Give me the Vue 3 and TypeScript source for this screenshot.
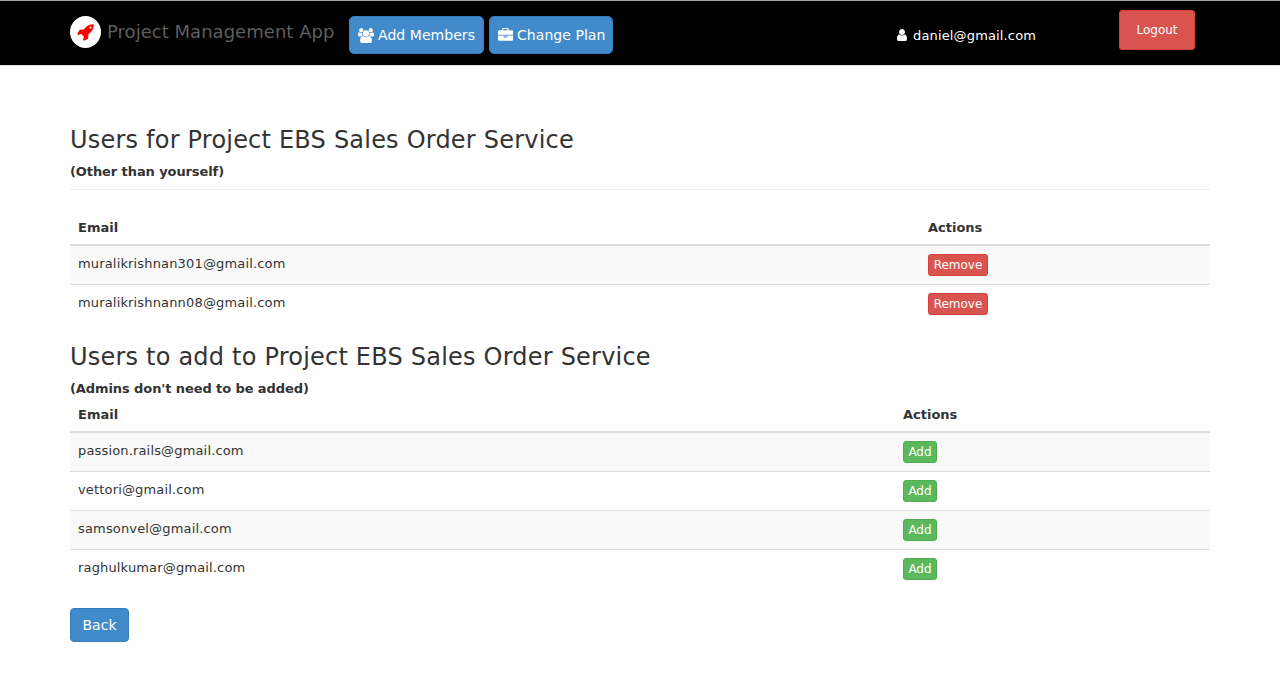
<script setup lang="ts">
interface Section {
  kind: string
  title: string
  note: string
  action: string
  emails: string[]
}

const sections: Section[] = [
  {
    kind: 'members',
    title: 'Users for Project EBS Sales Order Service',
    note: '(Other than yourself)',
    action: 'Remove',
    emails: ['muralikrishnan301@gmail.com', 'muralikrishnann08@gmail.com'],
  },
  {
    kind: 'candidates',
    title: 'Users to add to Project EBS Sales Order Service',
    note: "(Admins don't need to be added)",
    action: 'Add',
    emails: ['passion.rails@gmail.com', 'vettori@gmail.com', 'samsonvel@gmail.com', 'raghulkumar@gmail.com'],
  },
]
</script>

<template>
  <div class="page">
    <header class="navbar">
      <span class="logo">
        <svg width="18" height="18" viewBox="0 0 1792 1792"><path d="M1440 448q0-40-28-68t-68-28-68 28-28 68 28 68 68 28 68-28 28-68zm224-288q0 249-75.500 430.500t-253.500 360.500q-81 80-195 176l-20 379q-2 16-16 26l-384 224q-7 4-16 4-12 0-23-9l-64-64q-13-14-8-32l85-276-281-281-276 85q-3 1-9 1-14 0-23-9l-64-64q-17-19-5-39l224-384q10-14 26-16l379-20q96-114 176-195 188-187 358-258t431-71q14 0 24 9.500t10 22.500z" /></svg>
      </span>
      <span class="brand">Project Management App</span>
      <button class="btn nav-btn add-members">
        <svg width="16" height="15" viewBox="0 0 1920 1792"><path d="M593 896q-162 5-265 128h-134q-82 0-138-40.500t-56-118.500q0-353 124-353 6 0 43.500 21t97.500 42.500 119 21.500q67 0 133-23-5 37-5 66 0 159 81 256zm1071 637q0 120-73 189.500t-194 69.500h-874q-121 0-194-69.500t-73-189.500q0-53 3.500-103.500t14-109 26.500-108.500 43-97.500 62-81 85.500-53.500 111.500-20q10 0 43 21.500t73 48 107 48 135 21.500 135-21.500 107-48 73-48 43-21.500q61 0 111.500 20t85.500 53.500 62 81 43 97.500 26.500 108.500 14 109 3.500 103.500zm-1024-1277q0 106-75 181t-181 75-181-75-75-181 75-181 181-75 181 75 75 181zm704 384q0 159-112.500 271.500t-271.500 112.500-271.500-112.500-112.500-271.500 112.500-271.500 271.500-112.500 271.500 112.500 112.500 271.500zm576 225q0 78-56 118.500t-138 40.500h-134q-103-123-265-128 81-97 81-256 0-29-5-66 66 23 133 23 59 0 119-21.500t97.500-42.500 43.500-21q124 0 124 353zm-128-609q0 106-75 181t-181 75-181-75-75-181 75-181 181-75 181 75 75 181z" /></svg>
        <span>Add Members</span>
      </button>
      <button class="btn nav-btn change-plan">
        <svg width="15" height="15" viewBox="0 0 1792 1792"><path d="M640 256h512v-128h-512v128zm1152 640v480q0 66-47 113t-113 47h-1472q-66 0-113-47t-47-113v-480h672v160q0 26 19 45t45 19h320q26 0 45-19t19-45v-160h672zm-768 0v128h-256v-128h256zm768-480v384h-1792v-384q0-66 47-113t113-47h352v-160q0-40 28-68t68-28h576q40 0 68 28t28 68v160h352q66 0 113 47t47 113z" /></svg>
        <span>Change Plan</span>
      </button>
      <span class="account">
        <svg width="14" height="14" viewBox="0 0 1792 1792"><path d="M1536 1399q0 109-62.500 187t-150.500 78h-854q-88 0-150.500-78t-62.500-187q0-85 8.500-160.500t31.500-152 58.500-131 94-89 134.500-34.500q131 128 313 128t313-128q76 0 134.500 34.500t94 89 58.500 131 31.500 152 8.500 160.500zm-256-887q0 159-112.500 271.500t-271.500 112.500-271.500-112.500-112.500-271.500 112.500-271.500 271.500-112.500 271.500 112.500 112.500 271.500z" /></svg>
        <span class="account-email">daniel@gmail.com</span>
      </span>
      <button class="btn logout">Logout</button>
    </header>

    <main>
      <section v-for="s in sections" :key="s.kind" :class="s.kind">
        <h3>{{ s.title }}</h3>
        <p class="note">{{ s.note }}</p>
        <div class="table">
          <div class="row head"><span>Email</span><span>Actions</span></div>
          <div v-for="email in s.emails" :key="email" class="row">
            <span class="email">{{ email }}</span>
            <button class="btn small">{{ s.action }}</button>
          </div>
        </div>
      </section>
      <button class="btn back">Back</button>
    </main>
  </div>
</template>

<style>
body {
  background: #fff;
}
</style>

<style scoped>
.page {
  height: 700px;
  overflow: hidden;
  box-sizing: border-box;
  font: 13px/18px Verdana, "DejaVu Sans", sans-serif;
  color: #333;
}
.page * {
  box-sizing: border-box;
}
.navbar {
  display: flex;
  align-items: flex-start;
  height: 66px;
  padding-left: 70px;
  background: #000;
  border-top: 1px solid #a5a5a5;
  border-bottom: 1px solid #e7e7e7;
  white-space: nowrap;
}
svg {
  display: block;
  flex: none;
  fill: currentColor;
}
.logo {
  display: flex;
  align-items: center;
  justify-content: center;
  width: 31px;
  height: 32px;
  margin-top: 15px;
  border-radius: 50%;
  background: #fff;
  color: #f00;
}
.brand {
  width: 248px;
  margin-top: 21px;
  padding-left: 6px;
  font-size: 18px;
  line-height: 20px;
  letter-spacing: 0.03px;
  color: #5e5e5e;
}
.btn {
  display: flex;
  align-items: center;
  justify-content: center;
  padding: 0;
  font-family: inherit;
  color: #fff;
  border: 1px solid #357ebd;
  border-radius: 4px;
  background: #428bca;
  white-space: nowrap;
}
.nav-btn {
  height: 38px;
  margin-top: 15px;
  margin-right: 5px;
  padding-left: 8px;
  justify-content: flex-start;
  gap: 4px;
  font-size: 14px;
  letter-spacing: 0.05px;
  border-radius: 5px;
}
.add-members {
  width: 135px;
}
.change-plan {
  width: 124px;
}
.account {
  display: flex;
  align-items: center;
  width: 224px;
  height: 18px;
  margin: 25px 0 0 277px;
  gap: 4px;
  color: #fff;
}
.account-email {
  padding-top: 2px;
  letter-spacing: 0.15px;
}
.logout {
  width: 76px;
  height: 40px;
  margin-top: 9px;
  font-size: 12px;
  background: #d9534f;
  border-color: #d43f3a;
  border-radius: 3px;
}
main {
  padding: 60px 70px 0;
}
h3 {
  margin: 0;
  font-size: 24px;
  font-weight: 400;
  line-height: 28px;
  letter-spacing: 0.21px;
}
.note {
  margin: 0;
  padding-top: 9px;
  font-weight: 700;
  line-height: 18px;
  letter-spacing: -0.09px;
}
.members .note {
  height: 36px;
  border-bottom: 1px solid #eee;
}
.candidates .note {
  height: 27px;
}
.members .table {
  margin-top: 21px;
}
.members {
  height: 217px;
}
.candidates {
  height: 265px;
}
.row {
  display: grid;
  grid-template-columns: 850px 1fr;
  height: 39px;
  padding: 8px 8px 0;
  border-bottom: 1px solid #ddd;
}
.candidates .row {
  grid-template-columns: 825px 1fr;
}
.row.head {
  height: 35px;
  border-bottom-width: 2px;
  font-weight: 700;
}
.row:nth-child(even) {
  background: #f9f9f9;
}
.row:last-child {
  border-bottom: 0;
}
.email {
  padding-top: 1px;
  letter-spacing: 0.16px;
}
.small {
  width: 60px;
  height: 22px;
  font-size: 12px;
  background: #d9534f;
  border-color: #d43f3a;
  border-radius: 3px;
}
.candidates .small {
  width: 34px;
  background: #5cb85c;
  border-color: #4cae4c;
}
.back {
  width: 59px;
  height: 34px;
  font-size: 14px;
}
</style>
